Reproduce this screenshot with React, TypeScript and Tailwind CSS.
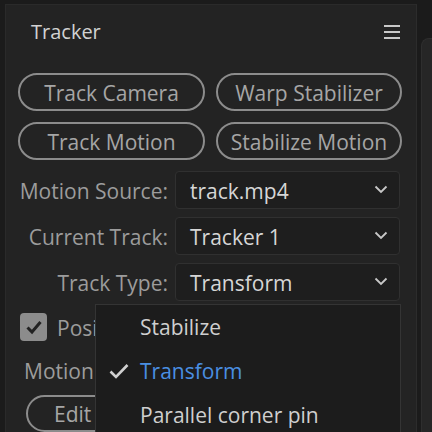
import React from "react";

const font = { fontFamily: '"Open Sans", "Noto Sans", sans-serif' };

function Chevron() {
  return (
    <svg width="14" height="9" viewBox="0 0 14 9" className="shrink-0">
      <path d="M1.5 1.5 L7 7 L12.5 1.5" fill="none" stroke="#c8c8c8" strokeWidth="1.8" />
    </svg>
  );
}

function PillButton({ label, w }: { label: string; w: string }) {
  return (
    <div
      className={`${w} h-[38px] rounded-full border-2 border-[#8c8c8c] flex items-center justify-center pt-[3px] text-[21px] text-[#a6a6a6] leading-none whitespace-nowrap`}
    >
      {label}
    </div>
  );
}

function SelectRow({ label, value }: { label: string; value: string }) {
  return (
    <div className="flex items-center h-[38px]">
      <div className="w-[150px] pt-[3px] text-right text-[21px] text-[#9c9c9c] leading-none whitespace-nowrap">{label}</div>
      <div className="ml-[7px] w-[225px] h-[38px] rounded-[4px] bg-[#1e1e1e] border border-[#303030] flex items-center justify-between pl-[14px] pr-[11px]">
        <span className="pt-[3px] text-[21px] text-[#d6d6d6] leading-none">{value}</span>
        <Chevron />
      </div>
    </div>
  );
}

export default function App() {
  return (
    <div className="w-[432px] h-[432px] bg-[#1b1b1b] overflow-hidden relative flex" style={font}>
      <div className="mt-[4px] ml-[5px] w-[412px] bg-[#232323] border-l border-t border-[#2a2a2a] border-r border-r-[#2c2c2c] flex flex-col pl-[12px] relative">
        <div className="flex items-center justify-between h-[56px] pr-[16px]">
          <span className="ml-[13px] text-[20px] text-[#d2d2d2]">Tracker</span>
          <div className="flex flex-col gap-[4px]">
            <div className="w-[16px] h-[2px] bg-[#c8c8c8]" />
            <div className="w-[16px] h-[2px] bg-[#c8c8c8]" />
            <div className="w-[16px] h-[2px] bg-[#c8c8c8]" />
          </div>
        </div>
        <div className="mt-[13px] flex flex-col gap-[11px]">
          <div className="flex gap-[11px]">
            <PillButton label="Track Camera" w="w-[187px]" />
            <PillButton label="Warp Stabilizer" w="w-[186px]" />
          </div>
          <div className="flex gap-[11px]">
            <PillButton label="Track Motion" w="w-[187px]" />
            <PillButton label="Stabilize Motion" w="w-[186px]" />
          </div>
        </div>
        <div className="mt-[11px] flex flex-col gap-[8px]">
          <SelectRow label="Motion Source:" value="track.mp4" />
          <SelectRow label="Current Track:" value="Tracker 1" />
          <SelectRow label="Track Type:" value="Transform" />
        </div>
        <div className="mt-[12px] flex items-center gap-[10px] ml-[2px]">
          <div className="w-[27px] h-[28px] rounded-[4px] bg-[#8c8c8c] flex items-center justify-center">
            <svg width="18" height="16" viewBox="0 0 18 16">
              <path d="M2.5 8.5 L7 13 L15.5 3" fill="none" stroke="#222" strokeWidth="3" />
            </svg>
          </div>
          <span className="pt-[3px] text-[21px] text-[#9c9c9c] leading-none">Position</span>
        </div>
        <div className="mt-[20px] ml-[6px] text-[21px] text-[#9c9c9c] leading-none whitespace-nowrap">Motion Target</div>
        <div className="mt-[13px] ml-[8px] w-[170px] h-[38px] rounded-full border-2 border-[#8c8c8c] flex items-center pl-[26px] pt-[3px] text-[21px] text-[#a6a6a6] leading-none whitespace-nowrap">
          Edit Target
        </div>
      </div>
      <div className="ml-[4px] mt-[38px] flex-1 bg-[#262626] rounded-tl-[8px] border-l border-t border-[#2e2e2e]" />
      <div className="absolute left-[95px] top-[304px] w-[306px] h-[140px] bg-[#1c1c1c] border border-[#343434] flex flex-col">
        <div className="h-[44px] flex items-center pl-[44px] text-[21px] text-[#cfcfcf] leading-none">Stabilize</div>
        <div className="h-[44px] flex items-center text-[21px] text-[#4a8fe2] leading-none">
          <div className="w-[44px] flex justify-center pl-[2px]">
            <svg width="22" height="18" viewBox="0 0 22 18">
              <path d="M2.5 9.5 L8 15 L19.5 3" fill="none" stroke="#d0d0d0" strokeWidth="2.6" />
            </svg>
          </div>
          Transform
        </div>
        <div className="h-[44px] flex items-center pl-[44px] text-[21px] text-[#cfcfcf] leading-none whitespace-nowrap">Parallel corner pin</div>
      </div>
    </div>
  );
}
